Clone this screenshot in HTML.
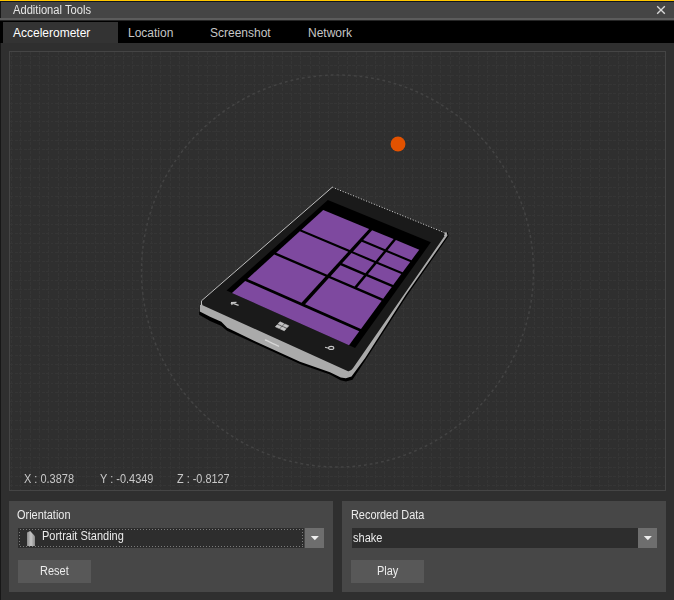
<!DOCTYPE html>
<html><head><meta charset="utf-8"><style>
*{margin:0;padding:0;box-sizing:border-box}
html,body{width:674px;height:600px;overflow:hidden;background:#2f2f2f;font-family:"Liberation Sans",sans-serif}
.a{position:absolute}
.t{position:absolute;white-space:nowrap;line-height:1}
</style></head><body>
<div class="a" style="left:0;top:0;width:674px;height:1px;background:#ffc600"></div>
<div class="a" style="left:0;top:1px;width:674px;height:1px;background:#12161e"></div>
<div class="a" style="left:0;top:2px;width:674px;height:16px;background:#454545"></div>
<div class="a" style="left:0;top:1px;width:1px;height:18px;background:#161616"></div>
<div class="a" style="left:0;top:18px;width:674px;height:2px;background:#5c5c5c"></div>
<div class="a" style="left:0;top:20px;width:674px;height:1px;background:#262626"></div>
<div class="t" style="left:13px;top:4px;font-size:12px;color:#e6e6e6;transform:scaleX(0.93);transform-origin:0 0">Additional Tools</div>
<svg class="a" style="left:655px;top:4px" width="12" height="12"><path d="M2.2 2.2 L9.8 9.8 M9.8 2.2 L2.2 9.8" stroke="#d8d8d8" stroke-width="1.35"/></svg>
<div class="a" style="left:0;top:21px;width:674px;height:22px;background:#000"></div>
<div class="a" style="left:3px;top:22px;width:115px;height:21px;background:#333"></div>
<div class="t" style="left:13px;top:27px;font-size:12px;color:#fff">Accelerometer</div>
<div class="t" style="left:128px;top:27px;font-size:12px;color:#c6c6c6">Location</div>
<div class="t" style="left:210px;top:27px;font-size:12px;color:#c6c6c6">Screenshot</div>
<div class="t" style="left:308px;top:27px;font-size:12px;color:#c6c6c6">Network</div>
<div class="a" style="left:9px;top:51px;width:657px;height:440px;border:1px solid #454545"></div>
<div class="a" style="left:0;top:43px;width:1px;height:557px;background:#171717"></div>
<svg class="a" style="left:0;top:0" width="674" height="600">
<defs><filter id="tb" x="-5%" y="-5%" width="110%" height="110%"><feGaussianBlur stdDeviation="0.75 0.45"/></filter>
<pattern id="gv" x="11" y="0" width="9.4" height="600" patternUnits="userSpaceOnUse"><rect x="0" y="0" width="1" height="600" fill="#363636"/></pattern>
<pattern id="gh" x="0" y="56" width="674" height="9.4" patternUnits="userSpaceOnUse"><rect x="0" y="0" width="674" height="1" fill="#363636"/></pattern>
</defs>
<path d="M11.5 52V490M20.5 52V490M30.5 52V490M39.5 52V490M48.5 52V490M58.5 52V490M67.5 52V490M76.5 52V490M86.5 52V490M95.5 52V490M104.5 52V490M114.5 52V490M123.5 52V490M132.5 52V490M142.5 52V490M151.5 52V490M160.5 52V490M170.5 52V490M179.5 52V490M188.5 52V490M198.5 52V490M207.5 52V490M216.5 52V490M226.5 52V490M235.5 52V490M244.5 52V490M254.5 52V490M263.5 52V490M272.5 52V490M282.5 52V490M291.5 52V490M300.5 52V490M310.5 52V490M319.5 52V490M328.5 52V490M338.5 52V490M347.5 52V490M356.5 52V490M366.5 52V490M375.5 52V490M384.5 52V490M394.5 52V490M403.5 52V490M412.5 52V490M422.5 52V490M431.5 52V490M440.5 52V490M450.5 52V490M459.5 52V490M468.5 52V490M478.5 52V490M487.5 52V490M496.5 52V490M506.5 52V490M515.5 52V490M524.5 52V490M534.5 52V490M543.5 52V490M552.5 52V490M562.5 52V490M571.5 52V490M580.5 52V490M590.5 52V490M599.5 52V490M608.5 52V490M618.5 52V490M627.5 52V490M636.5 52V490M646.5 52V490M655.5 52V490" stroke="#353535" stroke-width="1" stroke-dasharray="3 1.5" shape-rendering="crispEdges"/>
<path d="M10 56.5H665M10 65.5H665M10 75.5H665M10 84.5H665M10 93.5H665M10 103.5H665M10 112.5H665M10 121.5H665M10 131.5H665M10 140.5H665M10 149.5H665M10 159.5H665M10 168.5H665M10 177.5H665M10 187.5H665M10 196.5H665M10 205.5H665M10 215.5H665M10 224.5H665M10 233.5H665M10 243.5H665M10 252.5H665M10 261.5H665M10 271.5H665M10 280.5H665M10 289.5H665M10 299.5H665M10 308.5H665M10 317.5H665M10 327.5H665M10 336.5H665M10 345.5H665M10 355.5H665M10 364.5H665M10 373.5H665M10 383.5H665M10 392.5H665M10 401.5H665M10 411.5H665M10 420.5H665M10 429.5H665M10 439.5H665M10 448.5H665M10 457.5H665M10 467.5H665M10 476.5H665M10 485.5H665" stroke="#353535" stroke-width="1" stroke-dasharray="3 1.5" shape-rendering="crispEdges"/>
<circle cx="337.5" cy="271" r="196" fill="none" stroke="#434343" stroke-width="1.5" stroke-dasharray="2.8 3"/>
<circle cx="398" cy="144" r="7.45" fill="#e35200"/>
<polygon points="199.20,305.00 199.20,314.80 210.00,321.00 221.00,325.80 227.00,330.80 255.00,343.50 300.00,364.00 330.00,374.50 340.50,380.20 346.00,381.40 352.50,379.80 366.00,359.20 406.80,296.00 448.60,236.00 447.50,232.00" fill="#000"/>
<polygon points="199.80,305.00 199.80,311.40 210.00,316.80 221.30,321.80 227.20,327.80 255.00,341.20 300.00,361.70 330.00,372.20 340.80,377.60 345.80,378.20 351.50,376.50 365.20,358.00 405.70,295.00 447.50,235.50 446.50,232.00" fill="#aaa"/>
<path d="M332.30,187.20 L444.00,232.50 Q446.30,233.50 444.60,236.00 L353.10,368.00 Q350.20,372.20 347.50,370.90 L202.50,305.20 L201.50,300.80 Z" fill="#1a1a1a"/>
<polyline points="332.30,187.20 201.50,300.80 201.50,305.00" fill="none" stroke="#bdbdbd" stroke-width="1"/>
<line x1="332.30" y1="187.20" x2="444.00" y2="232.50" stroke="#d8d8d8" stroke-width="1" stroke-dasharray="1 1.8"/>
<path d="M444.00,232.50 Q446.30,233.50 444.60,236.00" fill="none" stroke="#cfcfcf" stroke-width="1"/>
<polygon points="327.84,200.11 430.86,242.36 355.09,347.92 226.56,290.53" fill="#000"/>
<g filter="url(#tb)">
<polygon points="323.24,210.01 369.12,228.97 349.81,250.05 301.53,229.73" fill="#7e4a9f"/>
<polygon points="372.12,230.21 393.61,239.09 385.20,249.28 363.17,240.10" fill="#7e4a9f"/>
<polygon points="395.92,240.04 419.22,249.67 411.46,260.23 387.57,250.27" fill="#7e4a9f"/>
<polygon points="361.74,241.68 383.86,250.91 375.61,260.91 352.97,251.38" fill="#7e4a9f"/>
<polygon points="386.23,251.91 410.22,261.92 402.61,272.28 378.04,261.94" fill="#7e4a9f"/>
<polygon points="299.81,231.29 348.28,251.73 327.24,274.70 276.19,252.74" fill="#7e4a9f"/>
<polygon points="351.45,253.06 374.18,262.65 365.41,273.28 342.12,263.37" fill="#7e4a9f"/>
<polygon points="376.62,263.68 401.29,274.08 393.19,285.10 367.91,274.34" fill="#7e4a9f"/>
<polygon points="340.51,265.16 363.89,275.13 354.55,286.45 330.58,276.14" fill="#7e4a9f"/>
<polygon points="366.40,276.20 391.79,287.01 383.16,298.76 357.13,287.56" fill="#7e4a9f"/>
<polygon points="274.24,254.51 325.50,276.60 301.54,302.76 247.40,278.90" fill="#7e4a9f"/>
<polygon points="328.85,278.05 381.66,300.80 360.98,328.95 305.09,304.32" fill="#7e4a9f"/>
<polygon points="245.17,280.92 359.26,331.29 349.03,345.21 231.94,292.93" fill="#7e4a9f"/>
</g>
<polygon points="279.94,321.80 284.00,323.62 282.12,325.69 278.04,323.86" fill="#c4c4c4" stroke="#c4c4c4" stroke-width="0.6"/>
<polygon points="277.27,324.68 281.36,326.52 279.45,328.61 275.35,326.77" fill="#c4c4c4" stroke="#c4c4c4" stroke-width="0.6"/>
<polygon points="284.74,323.95 288.81,325.78 286.94,327.86 282.86,326.02" fill="#c4c4c4" stroke="#c4c4c4" stroke-width="0.6"/>
<polygon points="282.10,326.85 286.19,328.69 284.30,330.80 280.19,328.95" fill="#c4c4c4" stroke="#c4c4c4" stroke-width="0.6"/>
<path d="M231 302.6 L238.6 305.4 M231 302.6 L236.5 302.4 M231 302.6 L232.3 304.9" stroke="#c4c4c4" stroke-width="1.2" fill="none"/>
<ellipse cx="331.2" cy="347.9" rx="2.6" ry="1.5" fill="none" stroke="#c8c8c8" stroke-width="1.1"/>
<path d="M325 347.2 L328.7 348.2" stroke="#c8c8c8" stroke-width="1.1"/>
<path d="M265.5 340 L278.5 346.2" stroke="#d6d6d6" stroke-width="1.4" stroke-linecap="round" stroke-dasharray="1.6 0.6"/>

</svg>
<div class="t" style="left:24px;top:473px;font-size:12px;color:#c8c8c8;transform:scaleX(0.914);transform-origin:0 0">X : 0.3878</div>
<div class="t" style="left:100px;top:473px;font-size:12px;color:#c8c8c8;transform:scaleX(0.914);transform-origin:0 0">Y : -0.4349</div>
<div class="t" style="left:177px;top:473px;font-size:12px;color:#c8c8c8;transform:scaleX(0.907);transform-origin:0 0">Z : -0.8127</div>

<div class="a" style="left:9px;top:501px;width:324px;height:91px;background:#474747"></div>
<div class="t" style="left:17px;top:509px;font-size:12px;color:#ececec;transform:scaleX(0.911);transform-origin:0 0">Orientation</div>
<div class="a" style="left:18px;top:528px;width:286px;height:20px;background:#2d2d2d"></div>
<svg class="a" style="left:18px;top:528px" width="286" height="20"><rect x="1.5" y="1.5" width="283" height="17" fill="none" stroke="#7c7c7c" stroke-width="1" stroke-dasharray="1 2" shape-rendering="crispEdges"/></svg>
<div class="a" style="left:27px;top:531px;width:8px;height:15px;background:linear-gradient(90deg,#8a8a8a,#c4c4c4 50%,#8a8a8a);clip-path:polygon(0 10%,40% 0,100% 35%,100% 100%,0 100%)"></div>
<div class="t" style="left:42px;top:530px;font-size:12px;color:#ececec;transform:scaleX(0.915);transform-origin:0 0">Portrait Standing</div>
<div class="a" style="left:305px;top:528px;width:19px;height:20px;background:#6e6e6e"></div>
<svg class="a" style="left:305px;top:528px" width="19" height="20"><path d="M5.8 8 L13.9 8 L9.85 12.2 Z" fill="#eee"/></svg>
<div class="a" style="left:18px;top:560px;width:73px;height:23px;background:#585858"></div>
<div class="t" style="left:40px;top:565px;font-size:12px;color:#ececec;transform:scaleX(0.915);transform-origin:0 0">Reset</div>

<div class="a" style="left:342px;top:501px;width:324px;height:91px;background:#474747"></div>
<div class="t" style="left:351px;top:509px;font-size:12px;color:#ececec;transform:scaleX(0.908);transform-origin:0 0">Recorded Data</div>
<div class="a" style="left:352px;top:528px;width:286px;height:20px;background:#2d2d2d"></div>
<div class="t" style="left:353px;top:532px;font-size:12px;color:#ececec;transform:scaleX(0.92);transform-origin:0 0">shake</div>
<div class="a" style="left:638px;top:528px;width:19px;height:20px;background:#6e6e6e"></div>
<svg class="a" style="left:638px;top:528px" width="19" height="20"><path d="M5.8 8 L13.9 8 L9.85 12.2 Z" fill="#eee"/></svg>
<div class="a" style="left:351px;top:560px;width:73px;height:23px;background:#585858"></div>
<div class="t" style="left:377px;top:565px;font-size:12px;color:#ececec;transform:scaleX(0.915);transform-origin:0 0">Play</div>
</body></html>
